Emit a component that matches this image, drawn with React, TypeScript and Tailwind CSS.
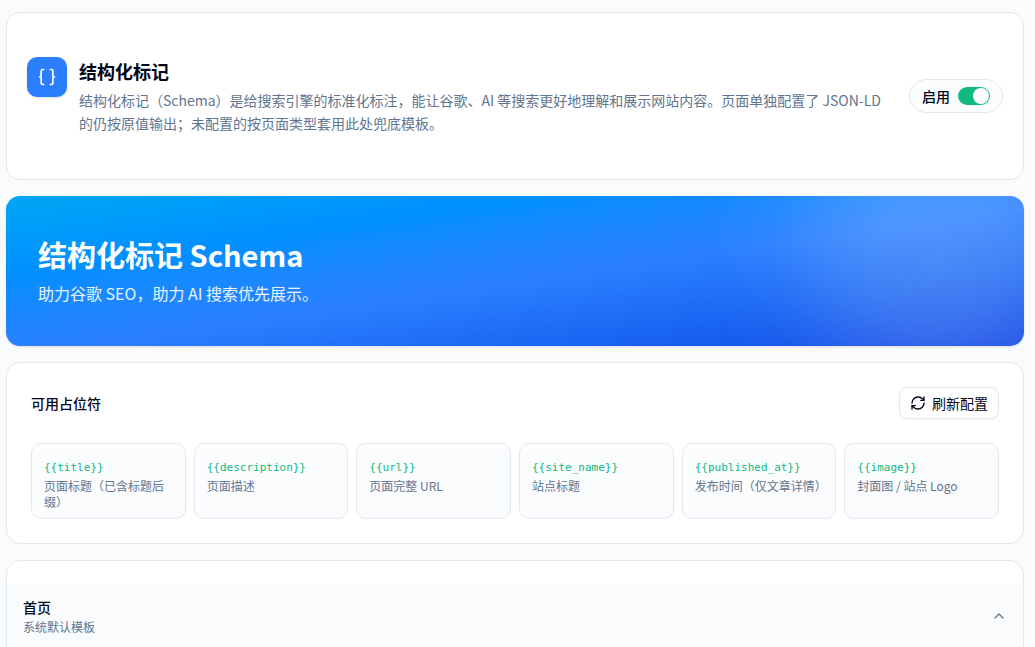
import { useState } from "react";
import { Braces, ChevronUp, RefreshCw } from "lucide-react";

const placeholders = [
  { token: "{{title}}", label: "页面标题（已含标题后缀）" },
  { token: "{{description}}", label: "页面描述" },
  { token: "{{url}}", label: "页面完整 URL" },
  { token: "{{site_name}}", label: "站点标题" },
  { token: "{{published_at}}", label: "发布时间（仅文章详情）" },
  { token: "{{image}}", label: "封面图 / 站点 Logo" },
];

function IntroCard() {
  const [enabled, setEnabled] = useState(true);
  return (
    <section className="flex items-center gap-7 rounded-[14px] border border-slate-200 bg-white px-5 py-11">
      <div className="flex min-w-0 flex-1 items-start gap-3">
        <div className="flex size-10 shrink-0 items-center justify-center rounded-[10px] bg-[#2b7fff] text-white shadow-sm">
          <Braces className="size-5" strokeWidth={2} aria-hidden="true" />
        </div>
        <div className="min-w-0">
          <h1 className="text-lg font-bold text-[#020618]">结构化标记</h1>
          <p className="mt-1 text-sm leading-[23px] text-slate-500">
            结构化标记（Schema）是给搜索引擎的标准化标注，能让谷歌、AI 等搜索更好地理解和展示网站内容。页面单独配置了 JSON-LD
            的仍按原值输出；未配置的按页面类型套用此处兜底模板。
          </p>
        </div>
      </div>
      <label className="flex shrink-0 items-center gap-2 rounded-full border border-slate-200 bg-[#fbfcfe] px-3 py-1.5 text-sm font-medium text-[#020618]">
        启用
        <input
          type="checkbox"
          role="switch"
          checked={enabled}
          onChange={(e) => setEnabled(e.target.checked)}
          className="flex h-[18px] w-8 appearance-none items-center rounded-full bg-slate-300 px-px before:size-4 before:rounded-full before:bg-white checked:justify-end checked:bg-[#10b981]"
        />
      </label>
    </section>
  );
}

function Banner() {
  return (
    <section className="rounded-[14px] bg-[radial-gradient(circle_at_92%_40%,rgb(255_255_255/0.19),rgb(255_255_255/0.16)_70px,rgb(255_255_255/0.1)_120px,rgb(255_255_255/0.03)_175px,transparent_230px),linear-gradient(to_bottom_right_in_oklch,#00a6f4,#008fff_27%,#2b7fff_54%,#1447e6)] px-8 py-[41px] text-white shadow-sm">
      <h2 className="text-[29px] leading-[34px] font-bold">结构化标记 Schema</h2>
      <p className="mt-2.5 text-base text-white/90">助力谷歌 SEO，助力 AI 搜索优先展示。</p>
    </section>
  );
}

function PlaceholderCard() {
  return (
    <section className="flex flex-col gap-6 rounded-[14px] border border-slate-200 bg-white p-6">
      <div className="flex items-center justify-between">
        <h2 className="text-sm font-medium text-[#020618]">可用占位符</h2>
        <button
          type="button"
          className="flex h-8 items-center gap-1.5 rounded-lg border border-slate-200 bg-white px-2.5 text-sm font-normal text-[#020618] shadow-xs"
        >
          <RefreshCw className="size-4" aria-hidden="true" />
          刷新配置
        </button>
      </div>
      <ul className="grid grid-cols-6 gap-2">
        {placeholders.map((item) => (
          <li key={item.token} className="rounded-[10px] border border-slate-200 bg-[#fbfcfe] px-3 pt-4 pb-2">
            <code className="block font-['DejaVu_Sans_Mono',monospace] text-[11px] leading-4 text-[#10b981]">{item.token}</code>
            <p className="mt-0.5 text-xs text-slate-500">{item.label}</p>
          </li>
        ))}
      </ul>
    </section>
  );
}

function TemplateCard() {
  const [open, setOpen] = useState(true);
  return (
    <section className="rounded-[14px] border border-slate-200 bg-white py-6">
      <button
        type="button"
        aria-expanded={open}
        onClick={() => setOpen(!open)}
        className="flex w-full items-center justify-between bg-[#fafbfd] px-4 py-3 text-left"
      >
        <span className="flex flex-col gap-0.5">
          <span className="text-sm font-medium text-[#020618]">首页</span>
          <span className="text-xs text-slate-500">系统默认模板</span>
        </span>
        <ChevronUp className={open ? "size-4 text-slate-500" : "size-4 rotate-180 text-slate-500"} aria-hidden="true" />
      </button>
    </section>
  );
}

export default function App() {
  return (
    <main className="flex min-h-screen flex-col gap-4 bg-[#fafbfd] pt-3 pr-[11px] pl-1.5 font-['Noto_Sans_CJK_SC',sans-serif]">
      <IntroCard />
      <Banner />
      <PlaceholderCard />
      <TemplateCard />
    </main>
  );
}
